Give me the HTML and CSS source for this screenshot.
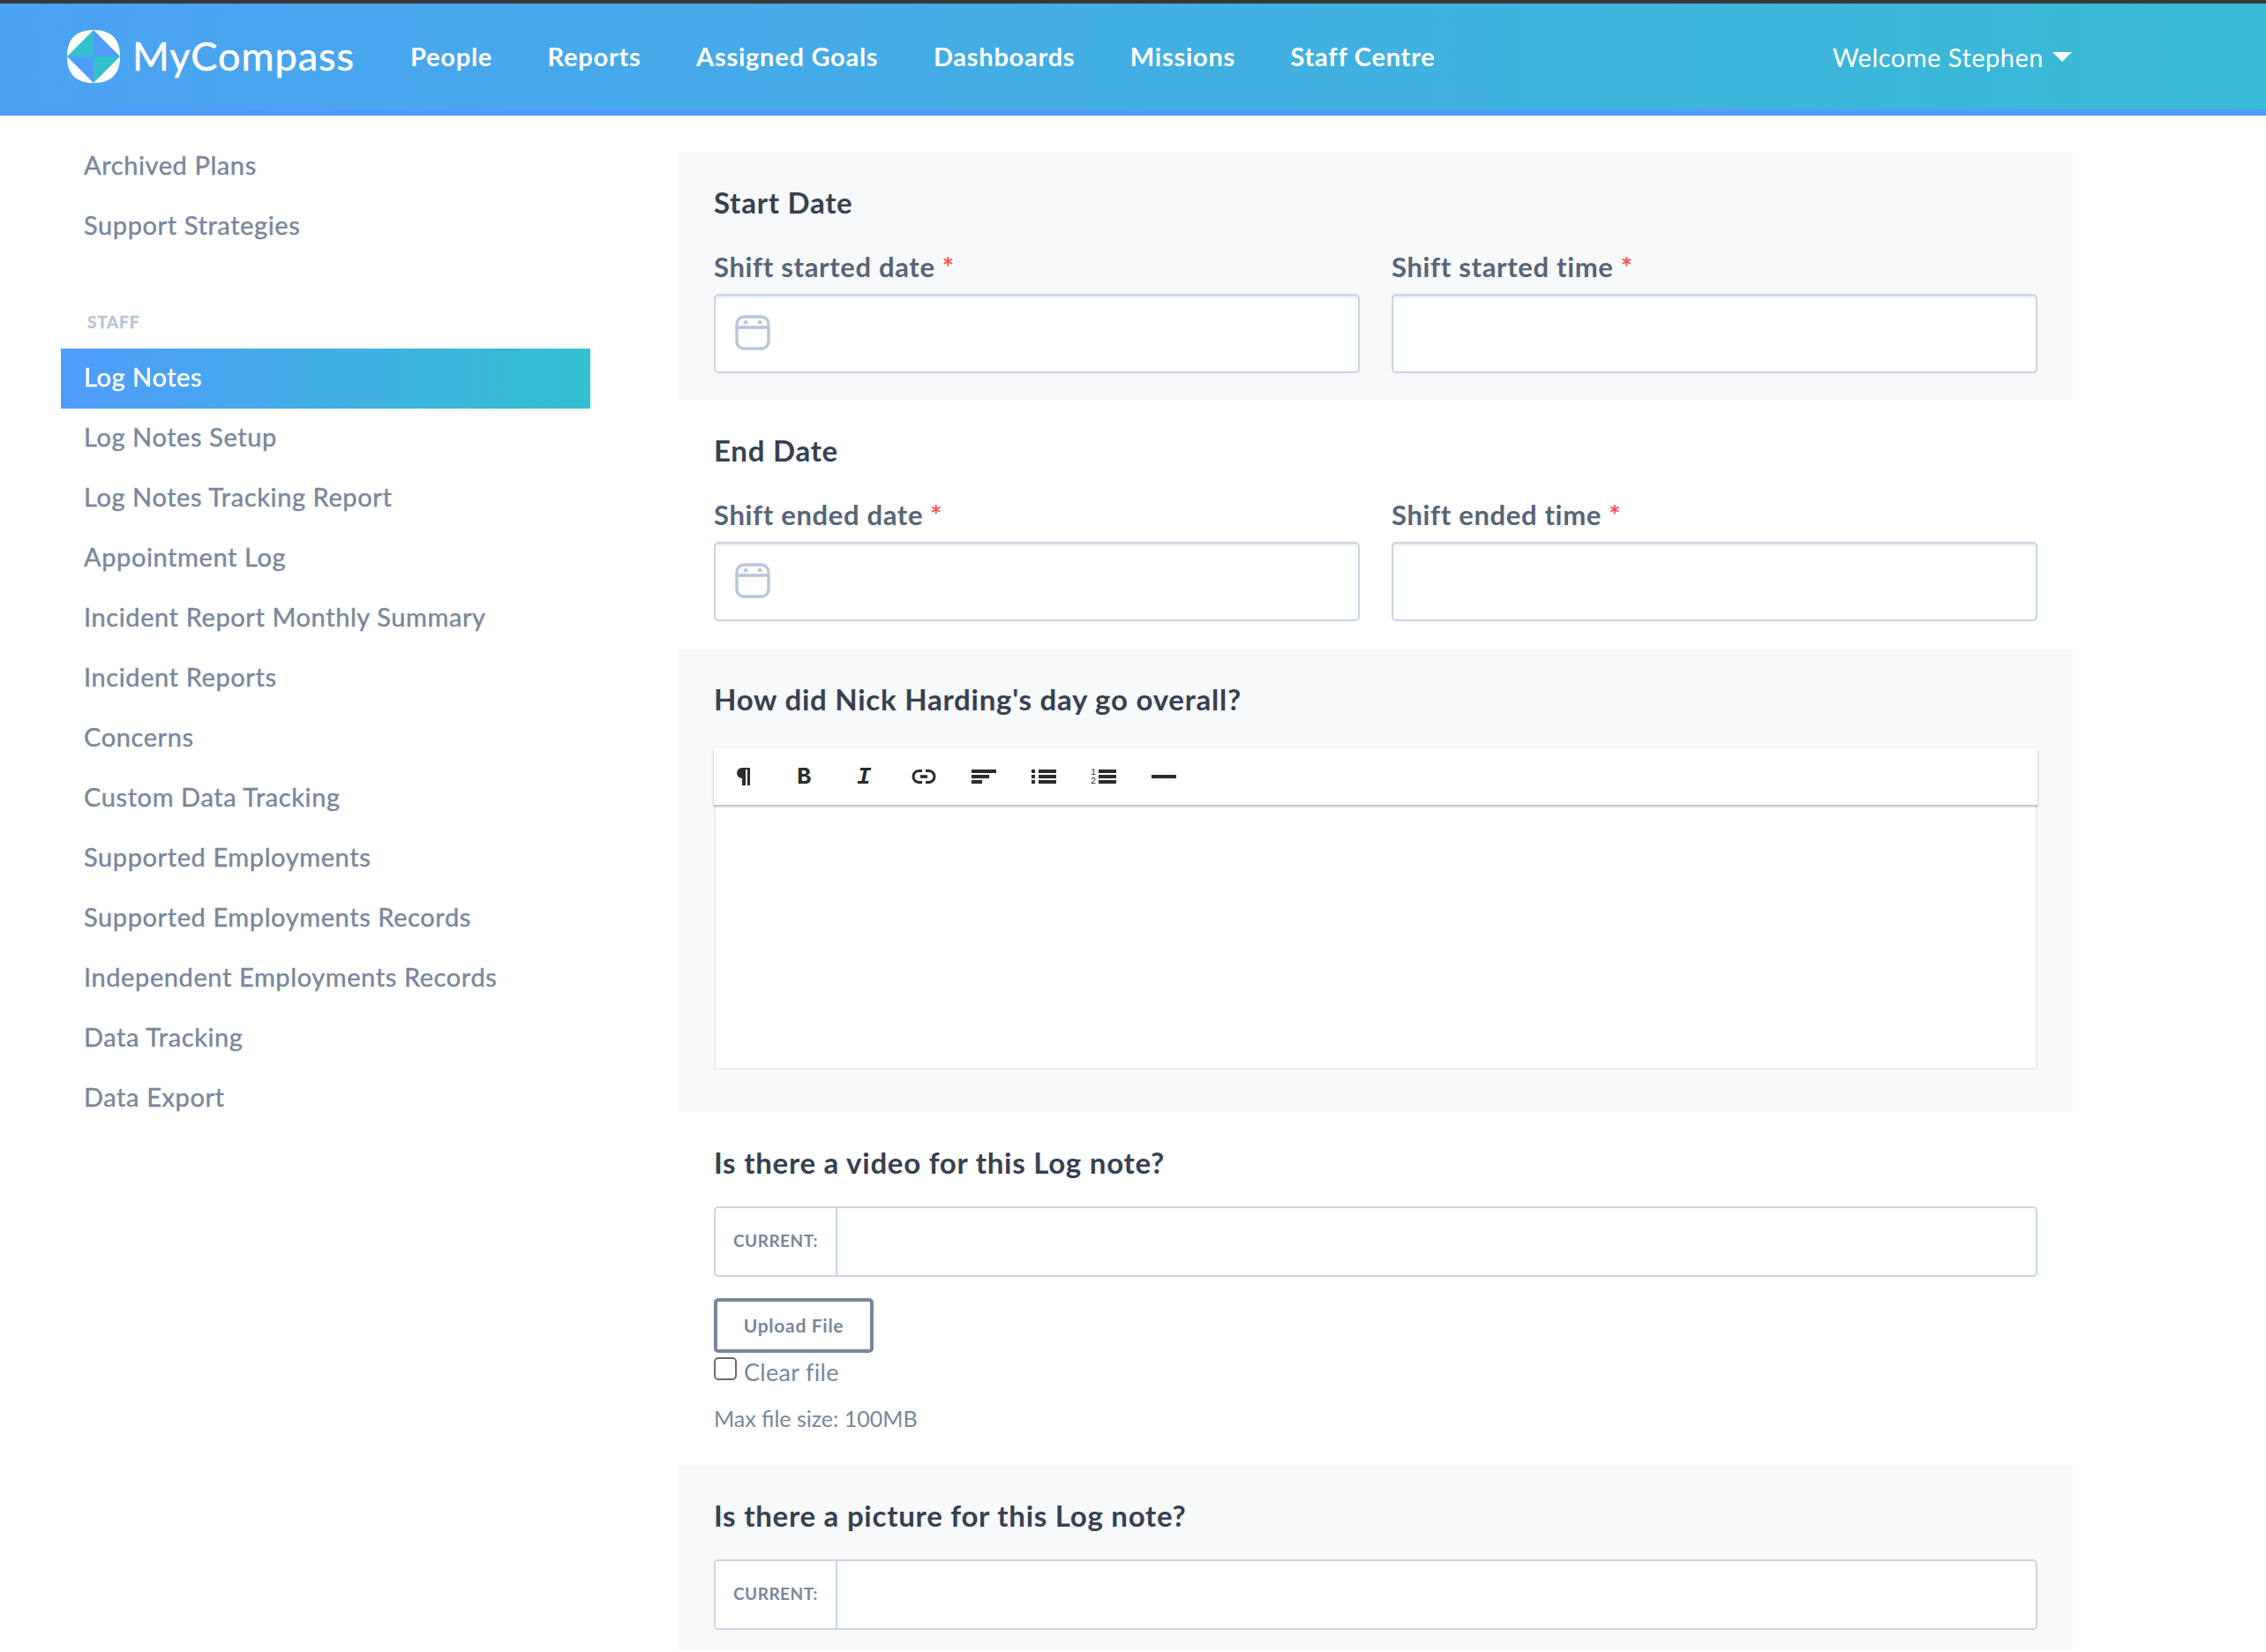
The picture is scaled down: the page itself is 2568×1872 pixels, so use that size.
FILE: index.html
```html
<!DOCTYPE html>
<html lang="en">
<head>
    <meta charset="utf-8">
    <title>MyCompass - Log Notes</title>
    <link rel="stylesheet" href="styles.css">
</head>
<body>
    <header class="header">
        <a class="logo" href="#">
            <svg class="logo-mark" viewBox="0 0 60 60">
                <path fill="#fff" d="M30 0C50 0 60 10 60 30S50 60 30 60 0 50 0 30 10 0 30 0z"/>
                <path fill="#33c0cf" d="M30 0v30H0zM30 60V30h30z"/>
                <path fill="#4f9cfb" d="M30 0v30h30zM30 60V30H0z"/>
            </svg>
            <span class="logo-text">MyCompass</span>
        </a>
        <nav class="nav">
            <a href="#">People</a>
            <a href="#">Reports</a>
            <a href="#">Assigned Goals</a>
            <a href="#">Dashboards</a>
            <a href="#">Missions</a>
            <a href="#">Staff Centre</a>
        </nav>
        <div class="user">Welcome Stephen <span class="caret"></span></div>
    </header>

    <div class="page">
        <aside class="sidebar">
            <a href="#">Archived Plans</a>
            <a href="#">Support Strategies</a>
            <h4 class="sidebar-title">STAFF</h4>
            <a href="#" class="active">Log Notes</a>
            <a href="#">Log Notes Setup</a>
            <a href="#">Log Notes Tracking Report</a>
            <a href="#">Appointment Log</a>
            <a href="#">Incident Report Monthly Summary</a>
            <a href="#">Incident Reports</a>
            <a href="#">Concerns</a>
            <a href="#">Custom Data Tracking</a>
            <a href="#">Supported Employments</a>
            <a href="#">Supported Employments Records</a>
            <a href="#">Independent Employments Records</a>
            <a href="#">Data Tracking</a>
            <a href="#">Data Export</a>
        </aside>

        <form class="content">
            <section class="panel first">
                <h3>Start Date</h3>
                <div class="fields">
                    <div class="field">
                        <label for="start_date">Shift started date <span class="required">*</span></label>
                        <div class="input">
                            <svg class="calendar" viewBox="0 0 40 40" fill="none" stroke="#b8c6d8" stroke-width="3.4">
                                <rect x="2" y="2" width="36" height="36" rx="8"/>
                                <path d="M2 14h36"/>
                                <g fill="#b8c6d8" stroke="none"><ellipse cx="12" cy="8.2" rx="2.6" ry="2.1"/><ellipse cx="28" cy="8.2" rx="2.6" ry="2.1"/></g>
                            </svg>
                            <input type="text" id="start_date">
                        </div>
                    </div>
                    <div class="field">
                        <label for="start_time">Shift started time <span class="required">*</span></label>
                        <div class="input"><input type="text" id="start_time"></div>
                    </div>
                </div>
            </section>

            <section class="panel">
                <h3>End Date</h3>
                <div class="fields">
                    <div class="field">
                        <label for="end_date">Shift ended date <span class="required">*</span></label>
                        <div class="input">
                            <svg class="calendar" viewBox="0 0 40 40" fill="none" stroke="#b8c6d8" stroke-width="3.4">
                                <rect x="2" y="2" width="36" height="36" rx="8"/>
                                <path d="M2 14h36"/>
                                <g fill="#b8c6d8" stroke="none"><ellipse cx="12" cy="8.2" rx="2.6" ry="2.1"/><ellipse cx="28" cy="8.2" rx="2.6" ry="2.1"/></g>
                            </svg>
                            <input type="text" id="end_date">
                        </div>
                    </div>
                    <div class="field">
                        <label for="end_time">Shift ended time <span class="required">*</span></label>
                        <div class="input"><input type="text" id="end_time"></div>
                    </div>
                </div>
            </section>

            <section class="panel">
                <h3>How did Nick Harding's day go overall?</h3>
                <div class="editor">
                    <div class="toolbar">
                        <button type="button"><svg width="28" height="20"><path d="M14 0h7v20h-3V2h-2v18h-4v-8a6 6 0 0 1 0-12z"/></svg></button>
                        <button type="button"><b>B</b></button>
                        <button type="button"><b><i>I</i></b></button>
                        <button type="button"><svg width="28" height="20" fill="none" stroke="#2b2b2b" stroke-width="3"><path d="M12 3.5H8.5a6.5 6.5 0 0 0 0 13H12M16 3.5h3.5a6.5 6.5 0 0 1 0 13H16"/><path d="M10 10h8" stroke-width="3.6"/></svg></button>
                        <button type="button"><svg width="28" height="20"><path d="M0 2h28v4H0zM0 8h20v4H0zM0 14h12v4H0z"/></svg></button>
                        <button type="button"><svg width="28" height="20"><path d="M0 2h4v4H0zM0 8h4v4H0zM0 14h4v4H0zM8 2h20v4H8zM8 8h20v4H8zM8 14h20v4H8z"/></svg></button>
                        <button type="button"><svg width="28" height="20"><path d="M8 2h20v4H8zM8 8h20v4H8zM8 14h20v4H8z"/><text x="-1" y="8">1</text><text x="-1" y="18">2</text></svg></button>
                        <button type="button"><svg width="28" height="20"><path d="M0 8h28v4H0z"/></svg></button>
                    </div>
                    <div class="editor-body" contenteditable="true"></div>
                </div>
            </section>

            <section class="panel">
                <h3>Is there a video for this Log note?</h3>
                <div class="current">
                    <span class="current-label">CURRENT:</span>
                    <span class="current-file"></span>
                </div>
                <button type="button" class="upload">Upload File</button>
                <label class="clear"><input type="checkbox">Clear file</label>
                <p class="hint">Max file size: 100MB</p>
            </section>

            <section class="panel last">
                <h3>Is there a picture for this Log note?</h3>
                <div class="current">
                    <span class="current-label">CURRENT:</span>
                    <span class="current-file"></span>
                </div>
            </section>
        </form>
    </div>
</body>
</html>
```
FILE: styles.css
```css
* {
    box-sizing: border-box;
}

body {
    margin: 0;
    font-family: Lato, sans-serif;
    font-size: 29px;
    color: #78879c;
    background-color: #fff;
    overflow: hidden;
}

a {
    color: inherit;
    text-decoration: none;
}

/* Header */
.header {
    display: flex;
    align-items: center;
    height: 131px;
    padding: 0 220px 0 76px;
    border-top: 4px solid #383838;
    border-bottom: 7px solid #4f9cfb;
    background: linear-gradient(to right, #4ba2f3, #38bbd4);
    color: #fff;
}

.logo {
    display: flex;
    align-items: center;
    width: 389px;
}

.logo-mark {
    width: 60px;
    height: 60px;
    margin-right: 14px;
}

.logo-text {
    font-size: 45px;
    letter-spacing: 1px;
    padding-bottom: 2px;
    -webkit-text-stroke: 0.5px;
}

.nav {
    display: flex;
    gap: 62.5px;
    padding-bottom: 2px;
    font-weight: bold;
    letter-spacing: 0.75px;
}

.user {
    display: flex;
    align-items: center;
    gap: 10px;
    margin-left: auto;
    letter-spacing: 0.5px;
}

.caret {
    border: 11px solid transparent;
    border-top-color: #fff;
    border-bottom: 0;
}

.page {
    display: flex;
    align-items: flex-start;
}

/* Sidebar */
.sidebar {
    width: 600px;
    margin: 24px 100px 0 69px;
    letter-spacing: 0.6px;
    -webkit-text-stroke: 0.4px;
}

.sidebar a {
    display: block;
    height: 68px;
    padding-left: 26px;
    line-height: 64px;
}

.sidebar a.active {
    color: #fff;
    background: linear-gradient(to right, #4f9cfb, #33c0cf);
}

.sidebar-title {
    margin: 62px 0 18px;
    padding-left: 30px;
    font-size: 19px;
    line-height: 24px;
    letter-spacing: 0.8px;
    color: #b8c6d8;
}

/* Form */
.content {
    width: 1580px;
    margin-top: 41px;
}

.panel {
    padding: 37px 40px 31px;
}

.panel:nth-child(odd) {
    background-color: #f8f9fb;
}

.panel.first {
    padding-bottom: 30px;
}

.panel.last {
    padding-bottom: 23px;
}

.panel h3 {
    margin: 0;
    font-size: 33px;
    line-height: 41px;
    height: 40px;
    letter-spacing: 0.75px;
    color: #364151;
}

.fields {
    display: flex;
    gap: 36px;
    margin-top: 33px;
}

.field {
    flex: 1;
}

.field label {
    display: block;
    height: 40px;
    margin-bottom: 11px;
    font-size: 31px;
    font-weight: bold;
    line-height: 41px;
    letter-spacing: 0.65px;
    color: #576577;
}

.required {
    color: #ff5252;
}

.input {
    display: flex;
    align-items: center;
    height: 90px;
    padding: 0 22px;
    border: 2px solid #cbd5e1;
    border-radius: 5px;
    background-color: #fff;
    box-shadow: inset 0 3px 3px -1px #dfe7ee;
}

.input input {
    flex: 1;
    border: none;
    background: none;
    font-size: 29px;
}

.calendar {
    width: 40px;
    height: 40px;
    margin-bottom: 2px;
}

/* Editor */
.editor {
    margin: 36px 0 17px;
}

.toolbar {
    position: relative;
    display: flex;
    height: 64px;
    background-color: #fff;
    box-shadow: 0 1px 4px rgba(0, 0, 0, 0.13), 0 2px 2px rgba(0, 0, 0, 0.2);
}

.toolbar button {
    width: 68px;
    padding: 0;
    border: none;
    background: none;
    font: 27px "Liberation Mono", monospace;
    color: #2b2b2b;
}

.toolbar b {
    display: block;
    padding-top: 2px;
}

.toolbar svg {
    display: block;
    margin: 0 auto;
    fill: #2b2b2b;
    overflow: visible;
}

.toolbar text {
    font-size: 10px;
}

.toolbar svg[fill="none"] {
    fill: none;
}

.editor-body {
    height: 300px;
    border: 2px solid #e9ebee;
    border-top: none;
    background-color: #fff;
}

/* File upload */
.current {
    display: flex;
    height: 80px;
    margin-top: 30px;
    border: 2px solid #cbd5e1;
    border-radius: 5px;
    background-color: #fff;
}

.current-label {
    width: 138px;
    padding-left: 20px;
    border-right: 2px solid #cbd5e1;
    font-size: 19px;
    font-weight: bold;
    line-height: 74px;
    letter-spacing: 0.5px;
}

.upload {
    display: block;
    width: 181px;
    height: 62px;
    margin-top: 24px;
    padding: 0 0 2px;
    border: 4px solid #78879c;
    border-radius: 5px;
    background-color: #fff;
    font: bold 21px Lato, sans-serif;
    letter-spacing: 0.7px;
    color: #78879c;
}

.clear {
    display: flex;
    gap: 8px;
    margin-top: 3px;
    font-size: 27px;
    line-height: 37px;
    height: 36px;
    letter-spacing: 0.3px;
}

.clear input {
    appearance: none;
    width: 26px;
    height: 26px;
    margin: 2px 0 0;
    border: 2px solid #6b6b6b;
    border-radius: 5px;
}

.hint {
    height: 36px;
    margin: 17px 0 4px;
    font-size: 25px;
    line-height: 37px;
}
```
